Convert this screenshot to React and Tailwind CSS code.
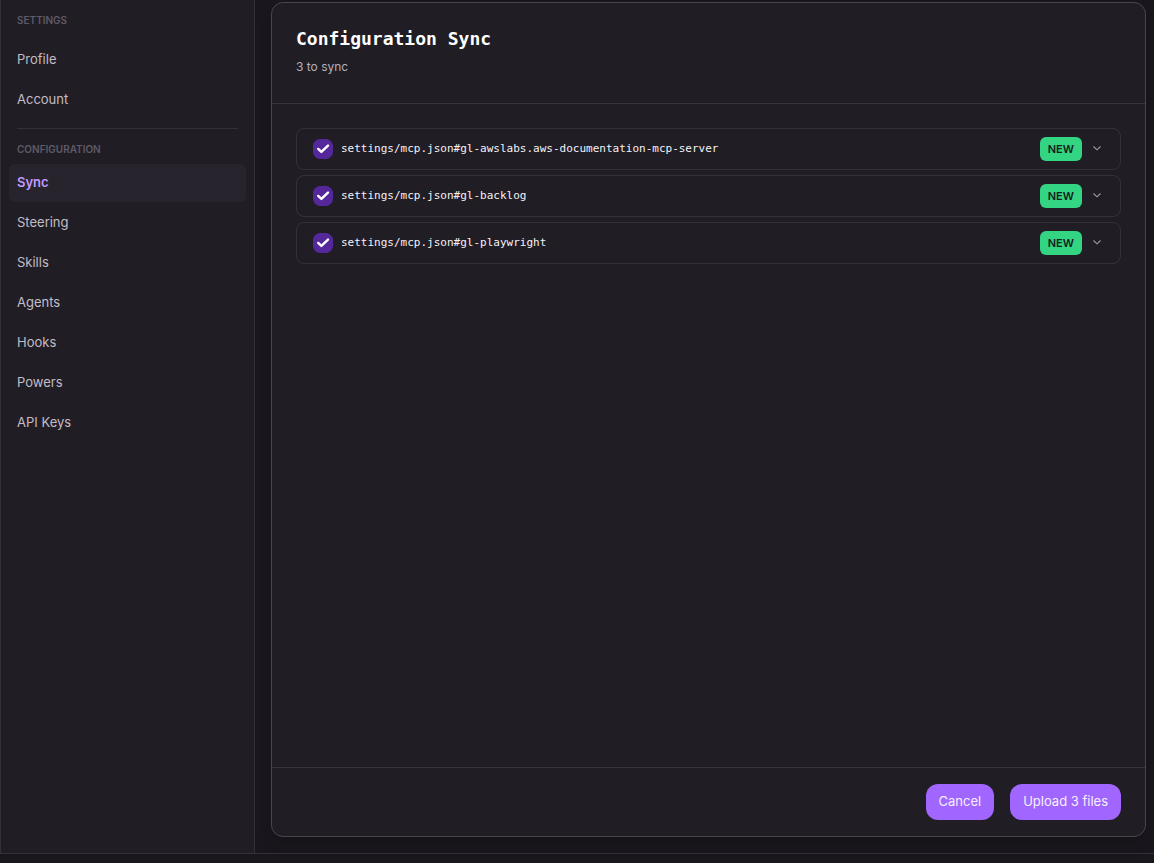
import React, { useState } from "react";

const settingsLinks = ["Profile", "Account"];
const configLinks = ["Sync", "Steering", "Skills", "Agents", "Hooks", "Powers", "API Keys"];

const files = [
  "settings/mcp.json#gl-awslabs.aws-documentation-mcp-server",
  "settings/mcp.json#gl-backlog",
  "settings/mcp.json#gl-playwright",
];

function NavLink({ label, active }) {
  return (
    <a
      href="#"
      aria-current={active ? "page" : undefined}
      className={
        active
          ? "flex items-center h-[38px] px-2 rounded-md bg-[#28242e] font-semibold text-[#c09aff]"
          : "flex items-center h-[38px] px-2 rounded-md text-[#c1bec6] hover:bg-[#28242e]"
      }
    >
      {label}
    </a>
  );
}

function Sidebar() {
  return (
    <aside className="w-[255px] shrink-0 border-x border-[#352f3d] bg-[#211d25] px-2 pt-3 text-[13px]">
      <h2 className="px-2 text-[10px] leading-4 font-semibold text-[#5e5a66]">SETTINGS</h2>
      <nav className="mt-[13px] flex flex-col gap-0.5">
        {settingsLinks.map((label) => (
          <NavLink key={label} label={label} />
        ))}
      </nav>

      <hr className="mx-2 mt-[9px] mb-3 border-[#352f3d]" />

      <h2 className="px-2 text-[10px] leading-4 font-semibold text-[#5e5a66]">CONFIGURATION</h2>
      <nav className="mt-[7px] flex flex-col gap-0.5">
        {configLinks.map((label) => (
          <NavLink key={label} label={label} active={label === "Sync"} />
        ))}
      </nav>
    </aside>
  );
}

function FileRow({ name, checked, onChange }) {
  return (
    <li className="flex items-center h-[42px] pl-4 pr-[18px] rounded-lg border border-[#352f3d]">
      <label className="flex flex-1 min-w-0 items-center gap-2">
        <span className="grid shrink-0 place-items-center">
          <input
            type="checkbox"
            checked={checked}
            onChange={onChange}
            className="peer col-start-1 row-start-1 size-5 appearance-none rounded-[7px] border border-[#54289a] checked:bg-[#54289a]"
          />
          <svg
            viewBox="0 0 20 20"
            className="col-start-1 row-start-1 size-5 pointer-events-none opacity-0 peer-checked:opacity-100"
            fill="none"
            stroke="#fff"
            strokeWidth="2.4"
            strokeLinecap="round"
            strokeLinejoin="round"
          >
            <path d="M5.2 9.9 L8.4 12.9 L15 6.6" />
          </svg>
        </span>
        <span className="truncate font-['DejaVu_Sans_Mono',monospace] text-[11px] text-[#f4f2f7]">{name}</span>
      </label>
      <span className="flex items-center h-6 px-2 rounded-md bg-[#33d482] text-[11px] font-semibold text-[#14201b]">NEW</span>
      <button type="button" aria-label="Show details" className="ml-[10px] text-[#a09ca6]">
        <svg viewBox="0 0 10 10" className="size-[10px]" fill="none" stroke="currentColor" strokeWidth="1.1">
          <path d="M1.5 2.5 L5 5.8 L8.5 2.5" />
        </svg>
      </button>
    </li>
  );
}

export default function App() {
  const [selected, setSelected] = useState(files);

  const toggle = (name) => {
    setSelected(selected.includes(name) ? selected.filter((f) => f !== name) : [...selected, name]);
  };

  return (
    <div className="h-screen bg-[#1a161d] pb-[9px] font-['Inter',sans-serif]">
      <div className="flex h-full border-b border-[#352f3d]">
        <Sidebar />

        {/* Sync panel */}
        <main className="flex flex-1 min-w-0 pt-0.5 pr-2 pb-4 pl-4">
          <section className="flex flex-1 min-w-0 flex-col rounded-xl border border-[#4a464e] bg-[#211d25] shadow-lg">
            <header className="border-b border-[#38343c] px-6 pt-[22px] pb-[26px]">
              <h1 className="font-['DejaVu_Sans_Mono',monospace] text-lg leading-7 font-bold text-white">
                Configuration Sync
              </h1>
              <p className="mt-1 text-[12px] leading-5 text-[#b3b0b8]">3 to sync</p>
            </header>

            <ul className="flex flex-1 flex-col gap-[5px] overflow-y-auto p-6">
              {files.map((name) => (
                <FileRow
                  key={name}
                  name={name}
                  checked={selected.includes(name)}
                  onChange={() => toggle(name)}
                />
              ))}
            </ul>

            <footer className="flex justify-end gap-4 border-t border-[#38343c] px-6 py-4 text-[13px] text-[#f6efff]">
              <button type="button" className="h-9 px-[13px] rounded-xl bg-[#a066ff] hover:bg-[#9152f8]">
                Cancel
              </button>
              <button type="button" className="h-9 px-[13px] rounded-xl bg-[#a066ff] hover:bg-[#9152f8]">
                Upload 3 files
              </button>
            </footer>
          </section>
        </main>
      </div>
    </div>
  );
}
